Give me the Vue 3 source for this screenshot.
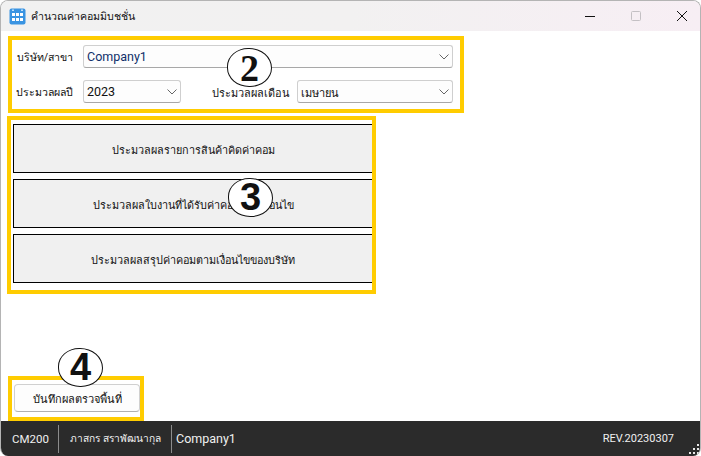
<script setup>
const actions = [
  'ประมวลผลรายการสินค้าคิดค่าคอม',
  'ประมวลผลใบงานที่ได้รับค่าคอมตามเงื่อนไข',
  'ประมวลผลสรุปค่าคอมตามเงื่อนไขของบริษัท',
]
</script>

<template>
  <div class="window">
    <header class="titlebar">
      <svg class="app-icon" width="17" height="17" viewBox="0 0 17 17">
        <rect x="0.5" y="0.5" width="16" height="16" rx="2" fill="#3a94e2" />
        <rect x="3" y="1.5" width="2" height="1.5" fill="#bfe0fa" />
        <rect x="12" y="1.5" width="2" height="1.5" fill="#bfe0fa" />
        <g fill="#fff">
          <rect x="3" y="5" width="3" height="3" />
          <rect x="7" y="5" width="3" height="3" />
          <rect x="11" y="5" width="3" height="3" />
          <rect x="3" y="10" width="3" height="3" />
          <rect x="7" y="10" width="3" height="3" />
          <rect x="11" y="10" width="3" height="3" />
        </g>
      </svg>
      <span class="title">คำนวณค่าคอมมิบชชั่น</span>
      <div class="controls">
        <svg width="12" height="12" viewBox="0 0 12 12"><path d="M1 6.5H11" stroke="#111" stroke-width="1" /></svg>
        <svg width="12" height="12" viewBox="0 0 12 12"><rect x="1.5" y="1.5" width="9" height="9" rx="1" fill="none" stroke="#c4c0c4" /></svg>
        <svg width="12" height="12" viewBox="0 0 12 12"><path d="M1 1L11 11M11 1L1 11" stroke="#111" stroke-width="1" /></svg>
      </div>
    </header>

    <main class="body">
      <section class="mark mark-filter">
        <div class="row">
          <label class="label label-first">บริษัท/สาขา</label>
          <div class="select select-wide">
            <span class="value value-blue">Company1</span>
            <svg class="chev" width="10" height="6" viewBox="0 0 10 6"><path d="M0.5 0.5L5 5L9.5 0.5" fill="none" stroke="#666" stroke-width="1" /></svg>
          </div>
        </div>
        <div class="row">
          <label class="label label-first">ประมวลผลปี</label>
          <div class="select select-year">
            <span class="value">2023</span>
            <svg class="chev" width="10" height="6" viewBox="0 0 10 6"><path d="M0.5 0.5L5 5L9.5 0.5" fill="none" stroke="#666" stroke-width="1" /></svg>
          </div>
          <label class="label label-month">ประมวลผลเดือน</label>
          <div class="select select-month">
            <span class="value value-thai">เมษายน</span>
            <svg class="chev" width="10" height="6" viewBox="0 0 10 6"><path d="M0.5 0.5L5 5L9.5 0.5" fill="none" stroke="#666" stroke-width="1" /></svg>
          </div>
        </div>
      </section>

      <section class="mark mark-actions">
        <button v-for="a in actions" :key="a" class="action" type="button">{{ a }}</button>
      </section>

      <div class="spacer"></div>

      <section class="mark mark-save">
        <button class="save" type="button">บันทึกผลตรวจพื้นที่</button>
      </section>

      <div class="bubble bubble-2">2</div>
      <div class="bubble bubble-3">3</div>
      <div class="bubble bubble-4">4</div>
    </main>

    <footer class="statusbar">
      <span class="code">CM200</span>
      <span class="person">ภาสกร สราพัฒนากุล</span>
      <span class="company">Company1</span>
      <span class="rev">REV.20230307</span>
      <svg class="grip" width="12" height="12" viewBox="0 0 12 12" fill="#e8e8e8">
        <rect x="9" y="1" width="2" height="2" />
        <rect x="5" y="5" width="2" height="2" />
        <rect x="9" y="5" width="2" height="2" />
        <rect x="1" y="9" width="2" height="2" />
        <rect x="5" y="9" width="2" height="2" />
        <rect x="9" y="9" width="2" height="2" />
      </svg>
    </footer>
  </div>
</template>

<style scoped>
.window {
  position: relative;
  box-sizing: border-box;
  width: 701px;
  height: 456px;
  display: flex;
  flex-direction: column;
  background: #fff;
  border: 1px solid #b4b4b4;
  border-bottom: 0;
  border-radius: 8px;
  overflow: hidden;
  font-family: Roboto, "Noto Sans", "Liberation Sans", sans-serif;
  color: #111;
}
.titlebar {
  flex: none;
  height: 30px;
  display: flex;
  align-items: center;
  padding-left: 8px;
  background: linear-gradient(90deg, #f1f1f1 0%, #f2f1f1 50%, #f7eef4 100%);
}
.app-icon { margin-right: 5px; }
.title { font-size: 10.6px; }
.controls {
  margin-left: auto;
  display: flex;
  gap: 34px;
  padding-right: 12px;
}
.body {
  position: relative;
  flex: 1;
  display: flex;
  flex-direction: column;
  align-items: flex-start;
  padding-top: 5px;
}
.mark {
  box-sizing: border-box;
  border: 4px solid #ffcc00;
}
.mark-filter {
  width: 456px;
  height: 77px;
  margin-left: 7px;
  padding: 5px 7px 0 0;
  display: flex;
  flex-direction: column;
  gap: 12px;
}
.row {
  display: flex;
  align-items: center;
  height: 23px;
}
.label {
  font-size: 10.6px;
  white-space: nowrap;
  padding-top: 2px;
}
.label-first { width: 61px; text-align: right; margin-right: 10px; }
.label-month { margin-left: 31px; width: 76px; margin-right: 9px; font-size: 10.9px; }
.select {
  box-sizing: border-box;
  height: 23px;
  display: flex;
  align-items: center;
  justify-content: space-between;
  padding: 0 3px 0 3px;
  background: #fdfdfd;
  border: 1px solid #cfcfcf;
  border-bottom-color: #a8a8a8;
  border-radius: 3px;
}
.select-wide { width: 370px; }
.select-year { width: 98px; }
.select-month { width: 156px; }
.value { font-size: 12.5px; }
.value-blue { color: #10306a; }
.value-thai { font-size: 11px; padding-top: 3px; }
.mark-actions {
  width: 369px;
  height: 178px;
  margin-top: 3px;
  margin-left: 6px;
  padding: 4px 0 6px 2px;
  display: flex;
  flex-direction: column;
  gap: 6px;
}
.action {
  box-sizing: border-box;
  height: 49px;
  margin: 0;
  padding: 3px 0 0;
  background: #f0f0f0;
  border: 1px solid #000;
  border-right: 0;
  font: 10.8px Roboto, "Noto Sans", "Liberation Sans", sans-serif;
  color: #111;
}
.spacer { flex: 1; }
.mark-save {
  width: 136px;
  height: 45px;
  margin-left: 7px;
  padding: 4px 0 0 2px;
}
.save {
  box-sizing: border-box;
  display: block;
  width: 126px;
  height: 28px;
  margin: 0;
  padding: 2px 0 0;
  background: #fdfdfd;
  border: 1px solid #d0d0d0;
  border-bottom-color: #b0b0b0;
  border-radius: 4px;
  font: 11px Roboto, "Noto Sans", "Liberation Sans", sans-serif;
  color: #111;
}
.bubble {
  position: absolute;
  box-sizing: border-box;
  width: 45px;
  height: 39px;
  display: flex;
  align-items: center;
  justify-content: center;
  background: #fff;
  border: 1.5px solid #111;
  border-radius: 48% 52% 50% 50%;
  font: bold 38px "Liberation Sans", sans-serif;
  color: #111;
}
.bubble-2 { left: 226px; top: 17px; font-family: "Liberation Serif", serif; }
.bubble-3 { left: 227px; top: 147px; }
.bubble-4 { left: 57px; top: 317px; }
.statusbar {
  position: relative;
  flex: none;
  height: 35px;
  margin: 0 -1px;
  display: flex;
  align-items: center;
  background: #2b2b2b;
  color: #f0f0f0;
  font-size: 11.5px;
}
.code {
  box-sizing: border-box;
  width: 59px;
  height: 28px;
  line-height: 28px;
  padding-left: 12px;
  border-right: 1px solid #8c8c8c;
}
.person {
  box-sizing: border-box;
  width: 113px;
  height: 28px;
  line-height: 28px;
  padding-left: 11px;
  border-right: 1px solid #8c8c8c;
  font-size: 10.2px;
  white-space: nowrap;
}
.company { padding-left: 4px; font-size: 12.5px; }
.rev { margin-left: auto; margin-right: 27px; font-size: 11px; }
.grip { position: absolute; right: 1px; bottom: 1px; }
</style>
